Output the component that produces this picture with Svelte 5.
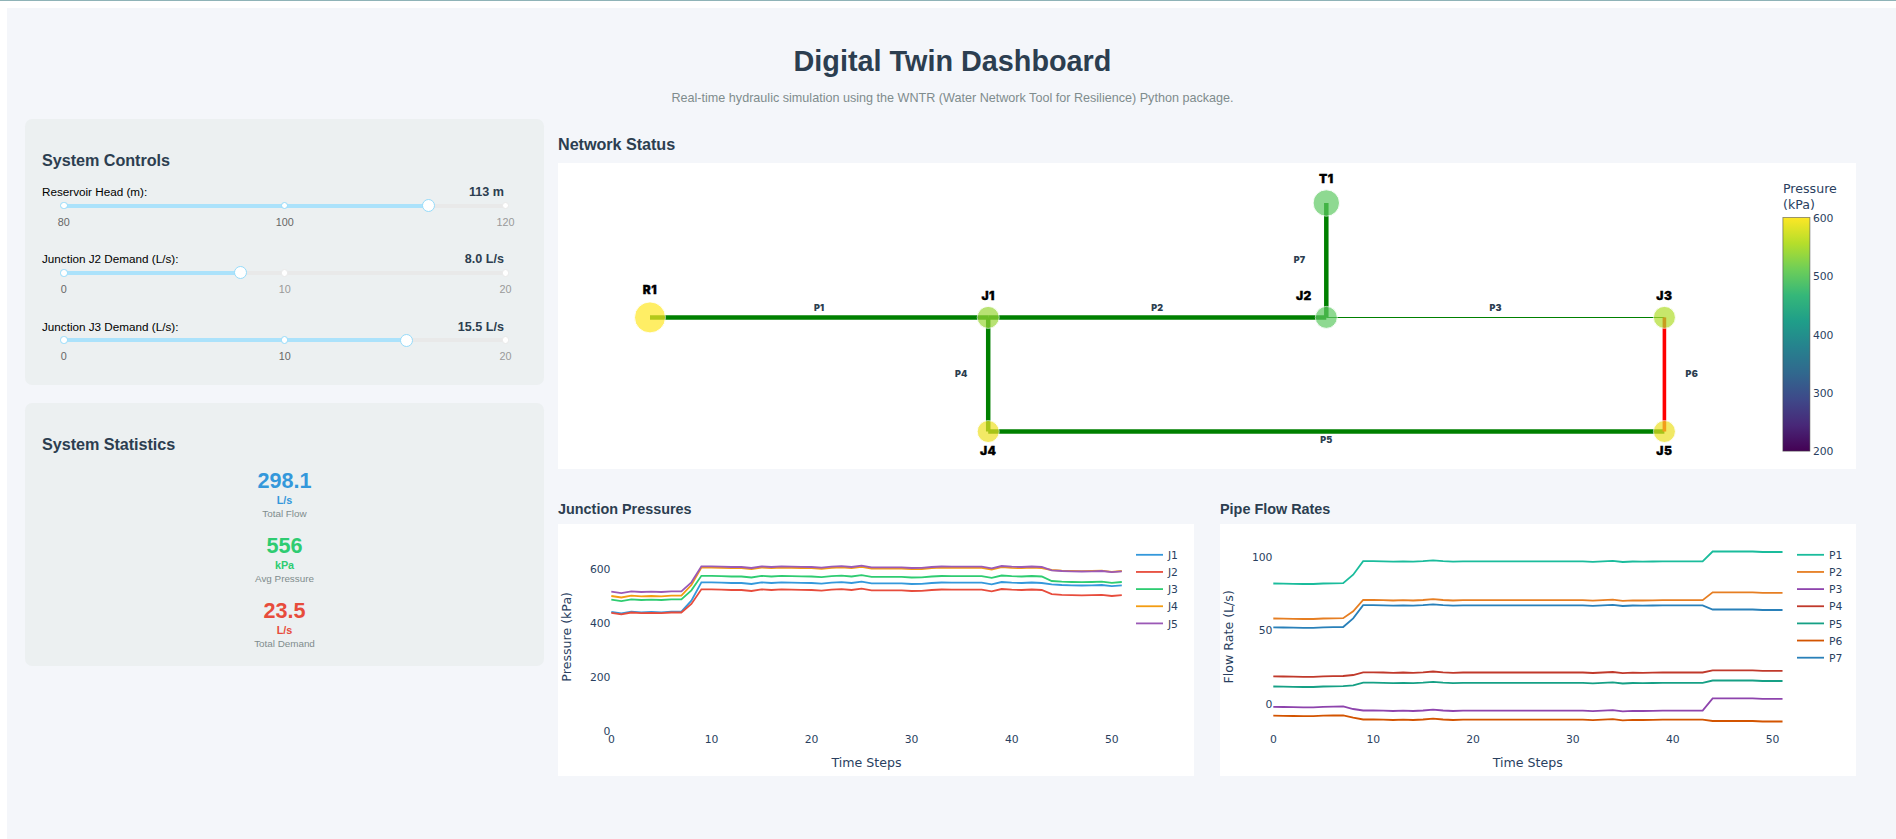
<script>
  const sliders = [
    { label: 'Reservoir Head (m):', value: '113 m', marks: [80, 100, 120], pct: 82.5 },
    { label: 'Junction J2 Demand (L/s):', value: '8.0 L/s', marks: [0, 10, 20], pct: 40 },
    { label: 'Junction J3 Demand (L/s):', value: '15.5 L/s', marks: [0, 10, 20], pct: 77.5 }
  ];

  const stats = [
    { value: '298.1', unit: 'L/s', name: 'Total Flow', color: '#3498db' },
    { value: '556', unit: 'kPa', name: 'Avg Pressure', color: '#2ecc71' },
    { value: '23.5', unit: 'L/s', name: 'Total Demand', color: '#e74c3c' }
  ];

  // Network drawing, in the coordinates of its 1298 x 306 canvas
  const pipes = [
    { id: 'P1', a: [92, 154.4], b: [430.2, 154.4], w: 4.5, c: '#008000', t: [261.2, 147.8] },
    { id: 'P2', a: [430.2, 154.4], b: [768.3, 154.4], w: 4.5, c: '#008000', t: [599.3, 147.8] },
    { id: 'P3', a: [768.3, 154.5], b: [1106.4, 154.5], w: 1.1, c: '#008000', t: [937.6, 147.8] },
    { id: 'P4', a: [430.2, 154.4], b: [430.2, 268.5], w: 4.5, c: '#008000', t: [403.3, 213.8] },
    { id: 'P5', a: [430.2, 268.5], b: [1106.4, 268.5], w: 4.5, c: '#008000', t: [768.3, 279.8] },
    { id: 'P6', a: [1106.4, 154.4], b: [1106.4, 268.5], w: 3.6, c: '#ff0000', t: [1133.8, 213.8] },
    { id: 'P7', a: [768.3, 154.4], b: [768.3, 40], w: 4.5, c: '#008000', t: [741.5, 99.8] }
  ];

  const nodes = [
    { id: 'R1', x: 92, y: 154.4, r: 15.5, c: '#ffe724', t: [92, 131] },
    { id: 'J1', x: 430.2, y: 154.4, r: 11, c: '#9ad738', t: [430.2, 137] },
    { id: 'J2', x: 768.3, y: 154.4, r: 11, c: '#5fca63', t: [745.9, 137] },
    { id: 'J3', x: 1106.4, y: 154.4, r: 11, c: '#b0de2d', t: [1106.4, 137] },
    { id: 'J4', x: 430.2, y: 268.5, r: 11, c: '#efe124', t: [430.2, 292] },
    { id: 'J5', x: 1106.4, y: 268.5, r: 11, c: '#ece024', t: [1106.4, 292] },
    { id: 'T1', x: 768.3, y: 40, r: 13.2, c: '#5fca63', t: [768.3, 20] }
  ];

  const viridis = ['#440154', '#482878', '#3e4989', '#31688e', '#26828e', '#1f9e89', '#35b779', '#6ece58', '#b5de2b', '#fde725'];

  // Each line is a shared profile plus one offset per simulation phase
  const pBase = [
    305, 309.5, 304, 306, 305, 306, 304, 304, 277, 229, 229, 230, 231, 231, 234, 229, 231, 229, 230, 230.5,
    231, 233, 230, 228.5, 231, 227, 232, 232, 232, 232, 234, 233.5, 231, 229.5, 230, 230, 230, 230, 235, 228,
    230, 231, 229.5, 231, 241, 243, 244, 244.5, 244, 243, 246.5, 244
  ];
  const fBase = [
    280.5, 281, 281.5, 282, 282, 280.5, 280, 279.5, 254, 213.5, 213.5, 214, 215, 214, 215, 213.5, 211, 213.5, 215, 214,
    214, 214, 214, 214, 214, 214, 214, 214, 214, 214, 214, 214, 215.5, 214, 212.5, 216, 214.5, 215, 214.5, 214,
    214, 214, 214, 214, 184.5, 184.5, 184.5, 184.5, 184.5, 186, 186, 186
  ];

  function line(base, off, x0, dx) {
    return base
      .map((v, i) => {
        const o = i < 8 ? off[0] : i === 8 ? off[1] : i < 44 ? off[2] : off[3];
        return `${(x0 + dx * i).toFixed(2)},${((v + o) / 3 - 34).toFixed(2)}`;
      })
      .join(' ');
  }

  const charts = [
    {
      title: 'Junction Pressures', yTitle: 'Pressure (kPa)', base: pBase, x0: 53.3, dx: 10.01,
      tx: 308.5, yx: 13.3, yEnd: 52.3, lx: 578, xTicks: [0, 10, 20, 30, 40, 50],
      yTicks: [[600, 49.3], [400, 103.3], [200, 157.3], [0, 211.3]],
      series: [
        { n: 'J1', c: '#3498db', o: [61, 55, 48, 42] },
        { n: 'J2', c: '#e74c3c', o: [63.5, 65, 69, 71.5] },
        { n: 'J3', c: '#2ecc71', o: [24, 24, 28.5, 32] },
        { n: 'J4', c: '#f39c12', o: [13, 8, 3.5, -1] },
        { n: 'J5', c: '#9b59b6', o: [0, 0, 0, 0] }
      ]
    },
    {
      title: 'Pipe Flow Rates', yTitle: 'Flow Rate (L/s)', base: fBase, x0: 53.3, dx: 9.985,
      tx: 307.8, yx: 13.3, yEnd: 52.3, lx: 577, xTicks: [0, 10, 20, 30, 40, 50],
      yTicks: [[100, 37.3], [50, 110.3], [0, 184.3]],
      series: [
        { n: 'P1', c: '#1abc9c', o: [0, 0, 0, 0] },
        { n: 'P2', c: '#e67e22', o: [105, 110, 116.5, 122.5] },
        { n: 'P3', c: '#8e44ad', o: [370, 403, 448, 440.5] },
        { n: 'P4', c: '#c0392b', o: [278.5, 301, 333.5, 356.5] },
        { n: 'P5', c: '#16a085', o: [309, 332, 364.5, 387] },
        { n: 'P6', c: '#d35400', o: [396.5, 429, 475, 508.5] },
        { n: 'P7', c: '#2980b9', o: [131.5, 131, 132, 174] }
      ]
    }
  ];
</script>

<div class="frame">
  <div class="page">
    <header>
      <h1>Digital Twin Dashboard</h1>
      <p>Real-time hydraulic simulation using the WNTR (Water Network Tool for Resilience) Python package.</p>
    </header>

    <div class="body">
      <aside>
        <section class="card controls">
          <h3>System Controls</h3>
          {#each sliders as s}
            <div class="control">
              <div class="caption"><span>{s.label}</span><b>{s.value}</b></div>
              <div class="slider">
                <div class="rail"><div class="track" style="width: {s.pct}%"></div></div>
                <div class="dots">
                  {#each s.marks as m, i}
                    <i><span class="dot" class:on={i * 50 <= s.pct}></span></i>
                  {/each}
                </div>
                <span class="handle" style="left: {s.pct}%"></span>
              </div>
              <div class="marks">
                {#each s.marks as m, i}
                  <i><span class:on={i * 50 <= s.pct}>{m}</span></i>
                {/each}
              </div>
            </div>
          {/each}
        </section>

        <section class="card statistics">
          <h3>System Statistics</h3>
          {#each stats as s}
            <div class="stat" style="color: {s.color}">
              <div class="num">{s.value}</div>
              <div class="unit">{s.unit}</div>
              <div class="name">{s.name}</div>
            </div>
          {/each}
        </section>
      </aside>

      <main>
        <h3>Network Status</h3>
        <svg class="plot" width="1298" height="306" viewBox="0 0 1298 306">
          <defs>
            <linearGradient id="scale" x1="0" y1="1" x2="0" y2="0">
              {#each viridis as c, i}<stop offset={i / 9} stop-color={c} />{/each}
            </linearGradient>
          </defs>
          {#each pipes as p}
            <line x1={p.a[0]} y1={p.a[1]} x2={p.b[0]} y2={p.b[1]} stroke={p.c} stroke-width={p.w} />
          {/each}
          {#each nodes as n}
            <circle cx={n.x} cy={n.y} r={n.r} fill={n.c} stroke="#fff" stroke-width="0.9" opacity="0.7" />
          {/each}
          {#each pipes as p}<text class="pipe" x={p.t[0]} y={p.t[1]}>{p.id}</text>{/each}
          {#each nodes as n}<text class="node" x={n.t[0]} y={n.t[1]}>{n.id}</text>{/each}
          <text class="axis" x="1225" y="30.3">Pressure</text>
          <text class="axis" x="1225" y="46.4">(kPa)</text>
          <rect x="1224.9" y="54.5" width="27" height="233.6" fill="url(#scale)" stroke="#444" stroke-opacity="0.6" stroke-width="0.9" />
          {#each [600, 500, 400, 300, 200] as v, i}
            <text class="tick" x="1255" y={59 + i * 58.3}>{v}</text>
          {/each}
        </svg>

        <div class="charts">
          {#each charts as c}
            <section>
              <h4>{c.title}</h4>
              <svg class="plot" width="636" height="252" viewBox="0 0 636 252">
                {#each c.series as s, i}
                  <polyline points={line(c.base, s.o, c.x0, c.dx)} stroke={s.c} />
                  <line x1={c.lx} x2={c.lx + 27} y1={30.8 + i * 17.15} y2={30.8 + i * 17.15} stroke={s.c} stroke-width="1.8" />
                  <text class="tick" x={c.lx + 32} y={35 + i * 17.15}>{s.n}</text>
                {/each}
                {#each c.xTicks as t}
                  <text class="tick mid" x={c.x0 + t * c.dx} y="219.3">{t}</text>
                {/each}
                {#each c.yTicks as t}
                  <text class="tick end" x={c.yEnd} y={t[1]}>{t[0]}</text>
                {/each}
                <text class="axis mid" x={c.tx} y="243.3">Time Steps</text>
                <text class="axis mid" transform="translate({c.yx} 112.8) rotate(-90)">{c.yTitle}</text>
              </svg>
            </section>
          {/each}
        </div>
      </main>
    </div>
  </div>
</div>

<style>
  :global(body) {
    margin: 0;
    background: #fff;
    overflow: hidden;
  }
  .frame {
    box-sizing: border-box;
    height: 839px;
    padding: 7px 0 0 7px;
    border-top: 1px solid #8fb3b7;
    overflow: hidden;
    font-family: 'Liberation Sans', Arial, sans-serif;
  }
  .page {
    box-sizing: border-box;
    height: 840px;
    padding: 36px 18px 0;
    background: #f4f6fa;
  }
  header {
    height: 75px;
    padding-left: 2px;
    text-align: center;
  }
  h1, h3, h4, p {
    margin: 0;
    color: #2c3e50;
  }
  h1 {
    font-size: 28.8px;
    line-height: 34px;
  }
  header p {
    margin-top: 12px;
    font-size: 12.6px;
    line-height: 16px;
    color: #7f8c8d;
  }
  .body {
    display: flex;
    gap: 14px;
  }
  aside {
    width: 519px;
    flex: none;
    display: flex;
    flex-direction: column;
    gap: 18px;
  }
  .card {
    box-sizing: border-box;
    border-radius: 7.2px;
    background: #ecf0f1;
    padding: 31px 17px 0;
  }
  h3 {
    font-size: 16.2px;
    line-height: 20px;
    letter-spacing: -0.05px;
  }
  .controls {
    height: 266px;
  }
  .controls h3 {
    margin-bottom: 15.3px;
  }
  .control {
    height: 67.2px;
  }
  .caption {
    display: flex;
    justify-content: space-between;
    padding-right: 23px;
    font-size: 11.7px;
    line-height: 14px;
    color: #000;
  }
  .caption b {
    font-size: 12.6px;
    color: #2c3e50;
  }
  .slider {
    position: relative;
    height: 13px;
    margin: 0 21.4px 0 21.8px;
    display: flex;
    align-items: center;
  }
  .rail {
    width: 100%;
    height: 4px;
    border-radius: 5px;
    background: #e9e9e9;
  }
  .track {
    height: 100%;
    border-radius: 5px;
    background: #abe2fb;
  }
  .dots {
    position: absolute;
    inset: 0;
    display: flex;
    justify-content: space-between;
    align-items: center;
  }
  i {
    width: 0;
    display: flex;
    justify-content: center;
    font-style: normal;
  }
  .dot {
    flex: none;
    box-sizing: border-box;
    width: 7.4px;
    height: 7.4px;
    border: 1.2px solid #e9e9e9;
    border-radius: 50%;
    background: #fff;
  }
  .dot.on {
    border-color: #96dbfa;
  }
  .handle {
    position: absolute;
    top: 0;
    box-sizing: border-box;
    width: 13px;
    height: 13px;
    margin-left: -6.3px;
    border: 1.2px solid #96dbfa;
    border-radius: 50%;
    background: #fff;
  }
  .marks {
    display: flex;
    justify-content: space-between;
    margin: 2.6px 21.4px 0 21.8px;
    font-size: 10.8px;
    line-height: 14px;
    color: #999;
  }
  .marks .on {
    color: #666;
  }
  .statistics {
    height: 263px;
  }
  .statistics h3 {
    margin-bottom: 14px;
  }
  .stat {
    height: 65px;
    text-align: center;
    font-weight: bold;
  }
  .num {
    font-size: 21.6px;
    line-height: 25px;
  }
  .unit {
    font-size: 10.8px;
    line-height: 14px;
  }
  .name {
    font-size: 9.9px;
    line-height: 13px;
    letter-spacing: -0.02px;
    font-weight: normal;
    color: #7f8c8d;
  }
  main {
    width: 1298px;
    flex: none;
    padding-top: 15px;
  }
  main h3 {
    margin-bottom: 9px;
  }
  .plot {
    display: block;
    background: #fff;
  }
  .charts {
    display: flex;
    justify-content: space-between;
    margin-top: 31px;
  }
  h4 {
    font-size: 14.4px;
    line-height: 18px;
    margin-bottom: 6px;
  }
  text {
    font-family: Verdana, 'DejaVu Sans', sans-serif;
    fill: #2a3f5f;
  }
  polyline {
    fill: none;
    stroke-width: 1.8;
  }
  .tick {
    font-size: 10.8px;
    letter-spacing: -0.1px;
  }
  .axis {
    font-size: 12.6px;
  }
  .mid {
    text-anchor: middle;
  }
  .end {
    text-anchor: end;
  }
  .pipe, .node {
    font-family: 'Arial Black', Inter, sans-serif;
    font-weight: 900;
    text-anchor: middle;
  }
  .pipe {
    font-size: 9px;
    letter-spacing: 0.2px;
    fill: #2c3e50;
  }
  .node {
    font-size: 12px;
    letter-spacing: 0.5px;
    fill: #000;
    stroke: #000;
    stroke-width: 0.3px;
  }
</style>
